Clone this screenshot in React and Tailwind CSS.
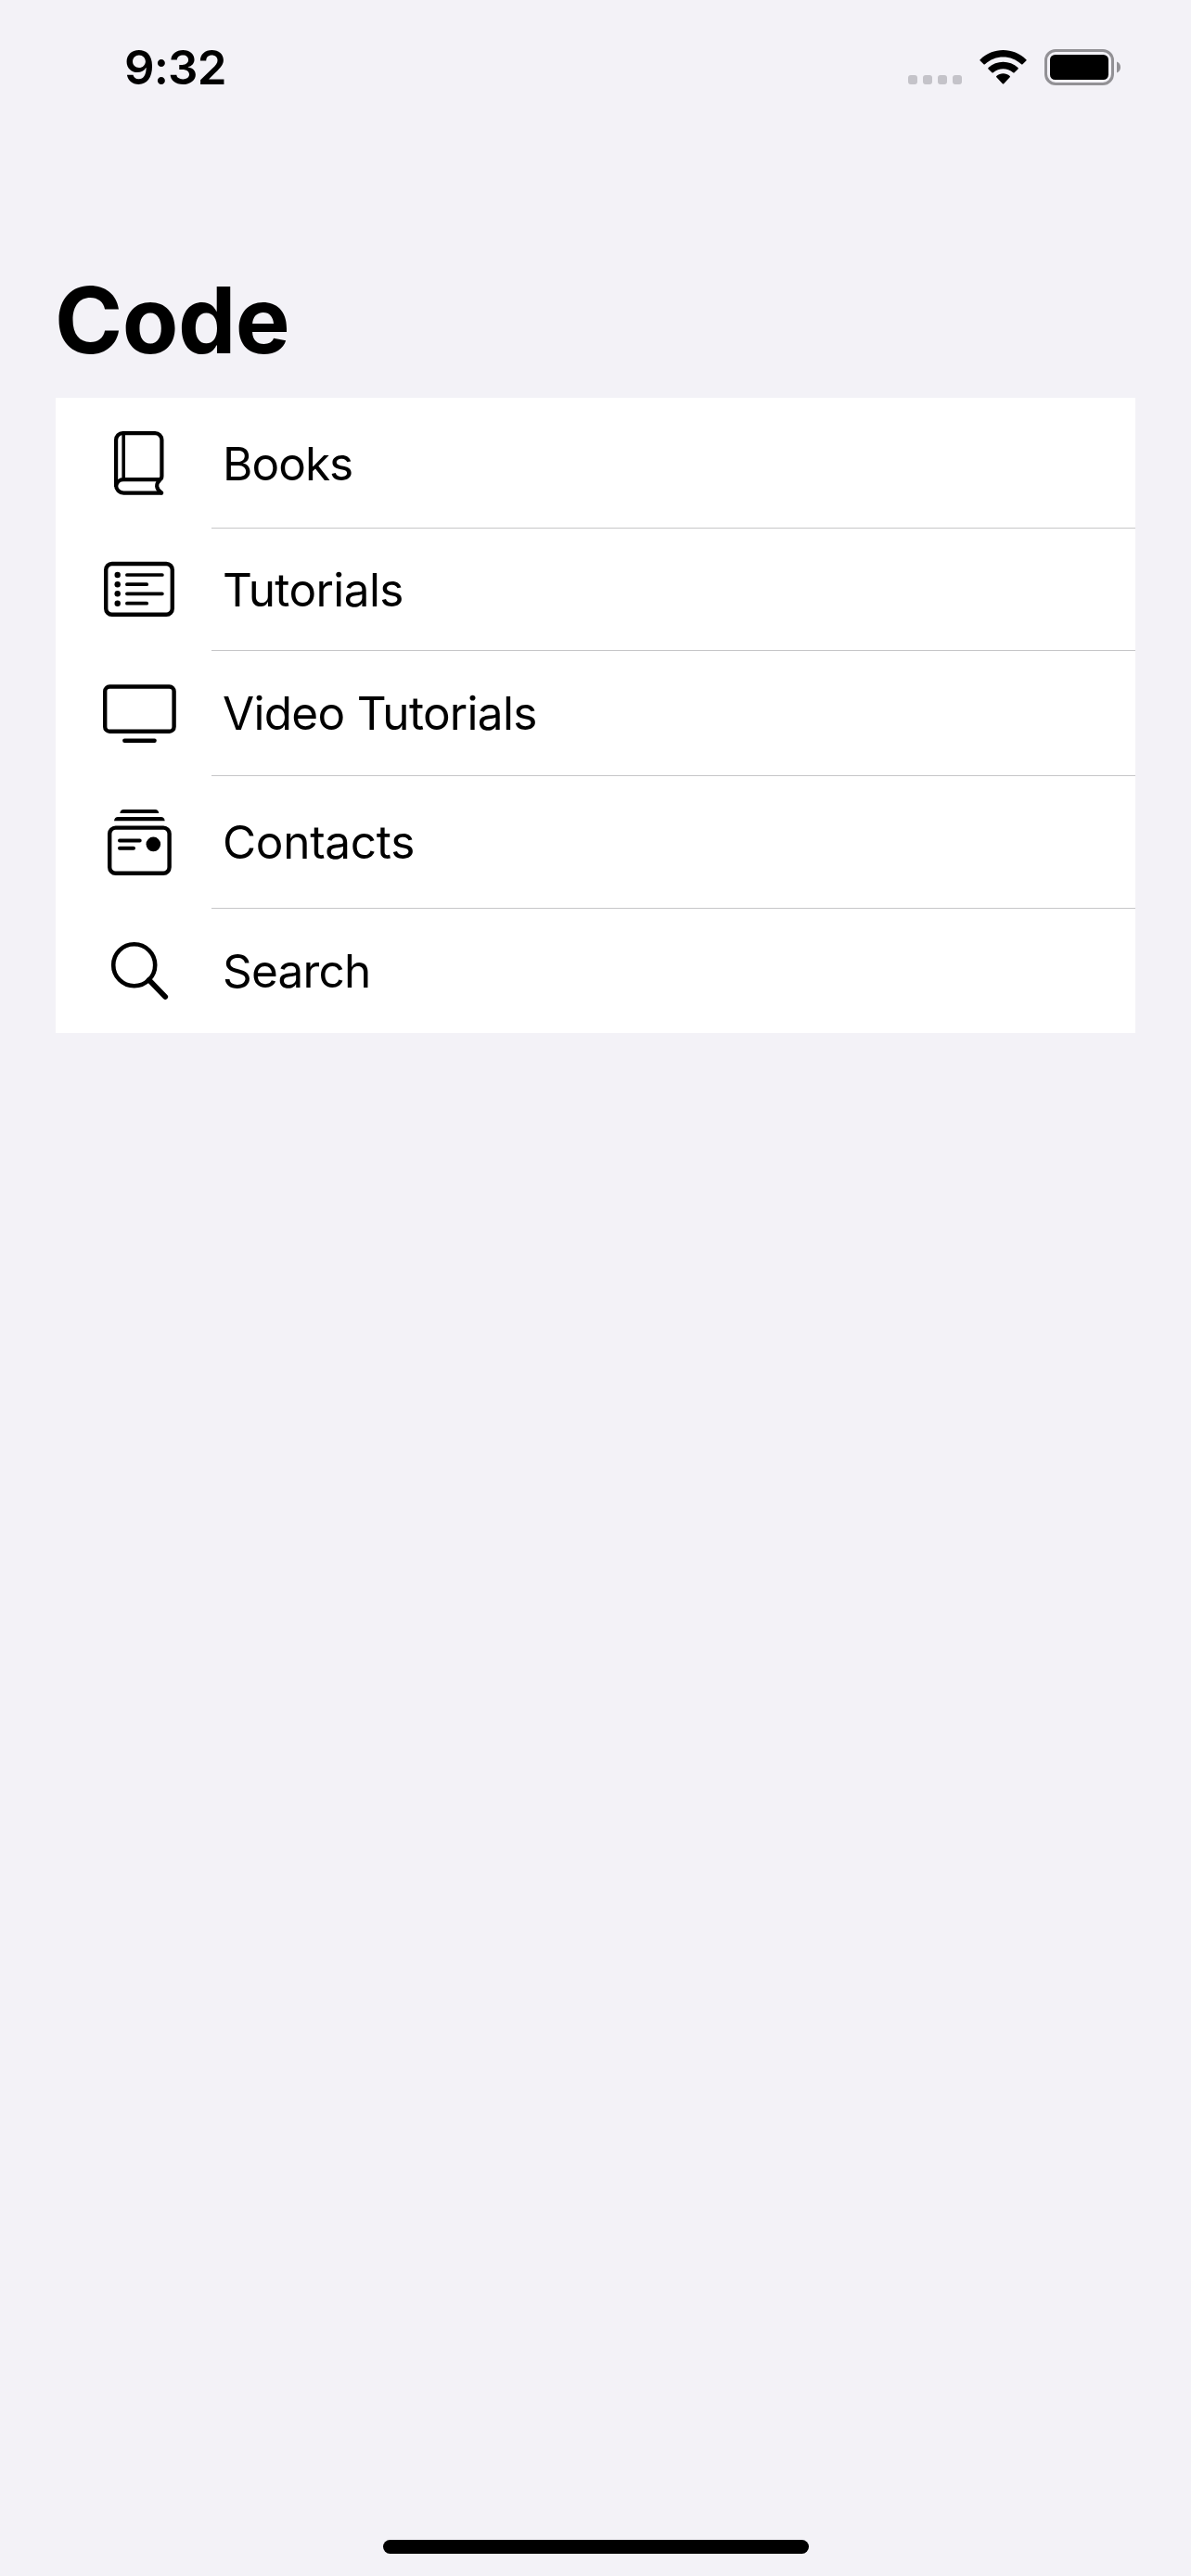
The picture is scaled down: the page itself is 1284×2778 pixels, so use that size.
const stroke = {
  fill: 'none',
  stroke: 'currentColor',
  strokeLinecap: 'round',
  strokeLinejoin: 'round',
};

function BookIcon() {
  return (
    <svg width="96" height="141" viewBox="0 0 96 141" {...stroke} strokeWidth="4.2">
      <path d="M72.2 102.7H31.3a8.2 8.2 0 0 1-8.2-8.2V45.3a7.2 7.2 0 0 1 7.2-7.2h34.9a7.2 7.2 0 0 1 7.2 7.2V84.6c0 2.4-1 3.6-3.2 3.6H31.3a8.2 8.2 0 0 0-8.2 7" />
      <path d="M31.2 39v48.5" strokeWidth="3.6" strokeLinecap="butt" />
      <path d="M70.4 88.4c-4.6 4.4-4.6 9.6 1.6 14" />
    </svg>
  );
}

function TutorialsIcon() {
  return (
    <svg width="96" height="132" viewBox="0 0 96 132" {...stroke} strokeWidth="4.4">
      <rect x="12.2" y="38" width="71.6" height="54.8" rx="6.5" />
      <g fill="currentColor" stroke="none">
        <circle cx="24.7" cy="50" r="3.2" />
        <circle cx="24.7" cy="60.2" r="3.2" />
        <circle cx="24.7" cy="70.3" r="3.2" />
        <circle cx="24.7" cy="80.7" r="3.2" />
      </g>
      <path d="M34.9 50h38M34.9 60.2h21.3M34.9 70.3h38M34.9 80.7h21.3" strokeWidth="3.7" />
    </svg>
  );
}

function DisplayIcon() {
  return (
    <svg width="96" height="135" viewBox="0 0 96 135" {...stroke} strokeWidth="4.4">
      <rect x="11.2" y="38.5" width="74.4" height="48.2" rx="5" />
      <path d="M32.3 96.7h32.3" />
    </svg>
  );
}

function ContactsIcon() {
  return (
    <svg width="96" height="143" viewBox="0 0 96 143" {...stroke} strokeWidth="4.4">
      <rect x="16.2" y="55.6" width="64.4" height="49.2" rx="6.5" />
      <g fill="currentColor" stroke="none">
        <path d="M27.3 40c.4-2.7 1.7-4 4-4h34c2.3 0 3.6 1.3 4 4z" />
        <path d="M21 48.2c.5-2.8 1.8-4.1 4.2-4.1h46.3c2.4 0 3.7 1.3 4.2 4.1z" />
        <circle cx="63.3" cy="73.4" r="7.8" />
      </g>
      <path d="M27 69.4h21.7M27 77.8h15" strokeWidth="4" />
    </svg>
  );
}

function SearchIcon() {
  return (
    <svg width="96" height="134" viewBox="0 0 96 134" {...stroke} strokeWidth="4.6">
      <circle cx="42.7" cy="60.8" r="22.5" />
      <path d="M58.6 76.8L76.2 95" strokeWidth="5.8" />
    </svg>
  );
}

const rows = [
  { label: 'Books', Icon: BookIcon, height: 'h-[141px]', text: 'border-b pt-[2px] tracking-[-0.95px]' },
  { label: 'Tutorials', Icon: TutorialsIcon, height: 'h-[132px]', text: 'border-b pt-px tracking-[-0.6px]' },
  { label: 'Video Tutorials', Icon: DisplayIcon, height: 'h-[135px]', text: 'border-b pt-px tracking-[-0.7px]' },
  { label: 'Contacts', Icon: ContactsIcon, height: 'h-[143px]', text: 'border-b tracking-[-0.3px]' },
  { label: 'Search', Icon: SearchIcon, height: 'h-[134px]', text: 'tracking-[-0.8px]' },
];

function StatusBar() {
  return (
    <header className="flex h-[145px] items-center justify-between pr-[76px] pl-[134px]">
      <time className="text-[51px] leading-none font-semibold tracking-[-0.9px]">9:32</time>
      <div className="flex items-start">
        <div className="mt-[28px] flex gap-[6px]">
          <span className="size-[10px] rounded-[3px] bg-[#c4c3c9]" />
          <span className="size-[10px] rounded-[3px] bg-[#c4c3c9]" />
          <span className="size-[10px] rounded-[3px] bg-[#c4c3c9]" />
          <span className="size-[10px] rounded-[3px] bg-[#c4c3c9]" />
        </div>
        <svg className="mt-px ml-[19px]" width="51" height="38" viewBox="0 0 51 38">
          <path d="M.7 10.2C14.5-3.4 36.5-3.4 50.3 10.2c.5.4.5 1 0 1.4l-3.8 3.7c-.4.4-1 .4-1.4 0C34.1 4.9 16.9 4.9 5.9 15.3c-.4.4-1 .4-1.4 0L.7 11.6c-.5-.4-.5-1 0-1.4z" />
          <path d="M9.5 19c9-8.2 23-8.2 32 0 .4.4.4 1 0 1.4l-3.9 3.9c-.4.4-1 .4-1.4 0-6.2-5.4-15.2-5.4-21.4 0-.4.4-1 .4-1.4 0l-3.9-3.9c-.4-.4-.4-1 0-1.4z" />
          <path d="M18.3 27.9c4.2-3.6 10.2-3.6 14.4 0 .4.4.4 1 0 1.4l-6.5 6.9c-.4.4-1 .4-1.4 0l-6.5-6.9c-.4-.4-.4-1 0-1.4z" />
        </svg>
        <svg className="ml-[19px]" width="82" height="39" viewBox="0 0 82 39">
          <rect x="1.5" y="1.5" width="72" height="36" rx="10.5" fill="none" stroke="#929195" strokeWidth="3" />
          <rect x="6" y="6" width="63" height="27" rx="5.5" />
          <path d="M78 13.5c2.6 1 4 3.3 4 6s-1.4 5-4 6z" fill="#929195" />
        </svg>
      </div>
    </header>
  );
}

export default function App() {
  return (
    <div className="flex h-[2778px] w-[1284px] flex-col bg-[#f3f2f7] font-[Inter,sans-serif] text-black">
      <StatusBar />
      <h1 className="mt-[155px] ml-[59px] h-[90px] text-[99px] leading-[90px] font-bold tracking-[-0.5px]">
        Code
      </h1>
      <ul className="mx-[60px] mt-[39px] bg-white">
        {rows.map(({ label, Icon, height, text }) => (
          <li key={label} className={`flex pl-[42px] ${height}`}>
            <Icon />
            <div className={`ml-[30px] flex flex-1 items-center border-[#c6c6c8] pl-[12px] text-[49.5px] ${text}`}>
              {label}
            </div>
          </li>
        ))}
      </ul>
      <div className="mt-auto mb-[24px] h-[15px] w-[459px] self-center rounded-full bg-black" />
    </div>
  );
}
